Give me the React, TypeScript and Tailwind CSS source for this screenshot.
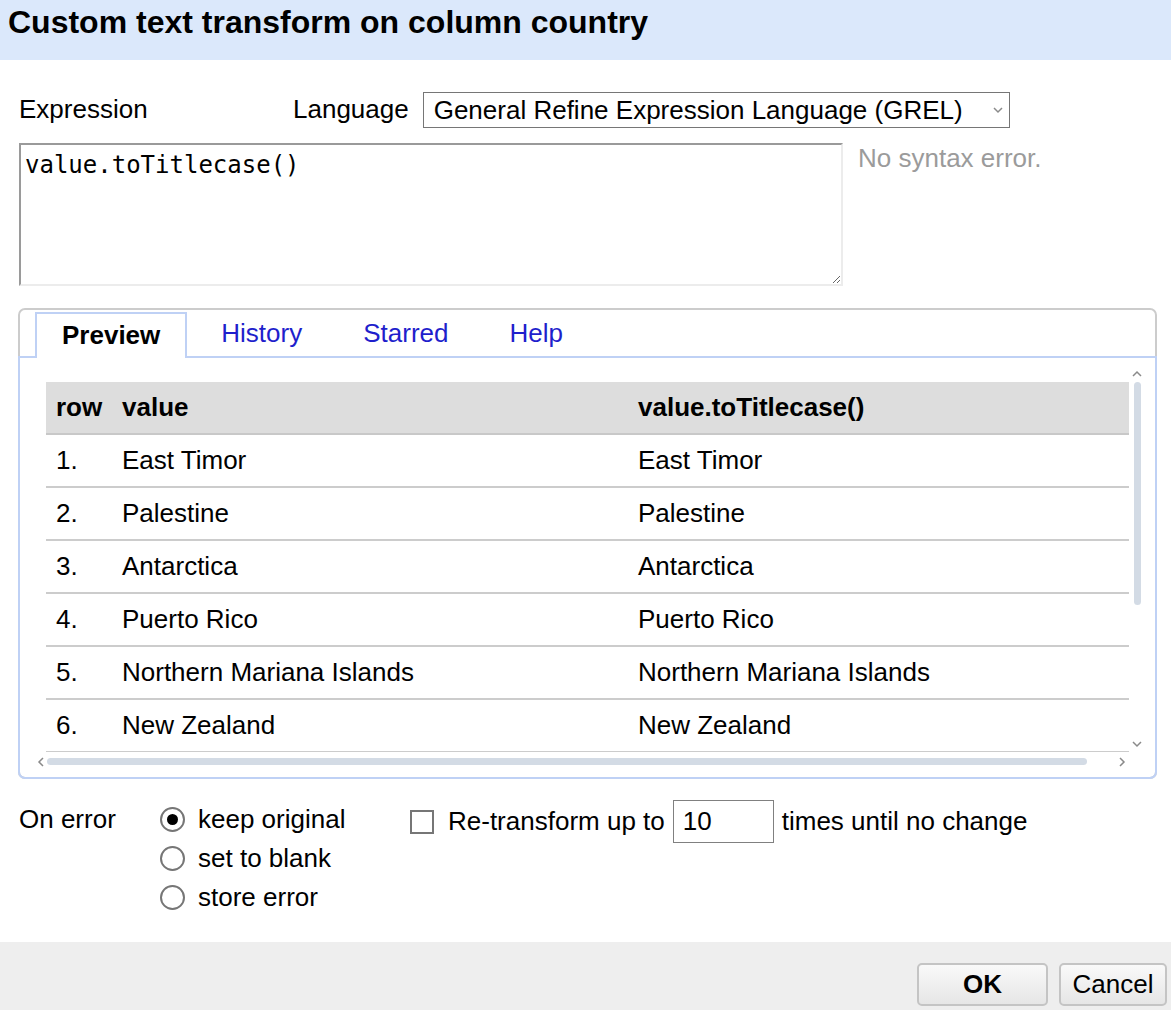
import React from "react";

const rows = [
  "East Timor",
  "Palestine",
  "Antarctica",
  "Puerto Rico",
  "Northern Mariana Islands",
  "New Zealand",
];

function Chevron({ dir }: { dir: "up" | "down" | "left" | "right" }) {
  const pts: Record<string, string> = {
    up: "1,6 5,2 9,6",
    down: "1,2 5,6 9,2",
    left: "6,1 2,5 6,9",
    right: "2,1 6,5 2,9",
  };
  const vertical = dir === "up" || dir === "down";
  return (
    <svg
      width={vertical ? 10 : 8}
      height={vertical ? 8 : 10}
      viewBox={vertical ? "0 0 10 8" : "0 0 8 10"}
      fill="none"
      stroke="#8a8a8a"
      strokeWidth={1.5}
    >
      <polyline points={pts[dir]} />
    </svg>
  );
}

function Radio({ checked, label }: { checked?: boolean; label: string }) {
  return (
    <div className="flex h-[39px] items-center">
      <span className="flex h-[25px] w-[25px] items-center justify-center rounded-full border-2 border-[#767676] bg-white">
        {checked && <span className="h-[11px] w-[11px] rounded-full bg-black" />}
      </span>
      <span className="ml-[13px]">{label}</span>
    </div>
  );
}

export default function App() {
  return (
    <div className="flex h-[1010px] w-[1171px] flex-col bg-white font-['Liberation_Sans',Arial,sans-serif] text-[26px] text-black">
      {/* title bar */}
      <div className="h-[60px] bg-[#dbe8fb] pl-[8px] pt-[3px]">
        <h1 className="text-[32px] font-bold leading-[38px]">Custom text transform on column country</h1>
      </div>

      <div className="flex-1 pl-[18px]">
        {/* language row */}
        <div className="mt-[30px] flex items-center pl-px">
          <span className="w-[274px]">Expression</span>
          <span>Language</span>
          <div className="ml-[14px] flex h-[36px] w-[587px] items-center border border-[#767676] pl-[10px] pr-[6px]">
            <span className="flex-1 leading-none">General Refine Expression Language (GREL)</span>
            <Chevron dir="down" />
          </div>
        </div>

        {/* expression box */}
        <div className="mt-[14px] flex items-start pl-px">
          <textarea
            readOnly
            value="value.toTitlecase()"
            className="h-[143px] w-[824px] resize border-2 border-t-[#9a9a9a] border-l-[#9a9a9a] border-r-[#ececec] border-b-[#ececec] px-[4px] py-[2px] font-['DejaVu_Sans_Mono',monospace] text-[24px] leading-[36px] outline-none"
          />
          <span className="ml-[15px] mt-[-4px] text-[#9b9b9b]">No syntax error.</span>
        </div>

        {/* tabs panel */}
        <div className="mt-[22px] w-[1139px] rounded-[7px] border-2 border-[#cccccc]">
          <div className="flex gap-[7px] pl-[15px] pt-[2px]">
            <div className="relative z-10 -mb-[2px] flex h-[46px] items-center border-2 border-b-0 border-[#bfd1f5] bg-white px-[25px] pb-[2px] font-bold">
              Preview
            </div>
            {["History", "Starred", "Help"].map((t) => (
              <div key={t} className="flex h-[44px] items-center px-[27px] pb-[2px] text-[#1f1fcc]">
                {t}
              </div>
            ))}
          </div>

          <div className="-mx-[2px] -mb-[2px] rounded-b-[7px] border-2 border-[#bfd1f5] pb-[6px] pl-[15px] pr-[10px] pt-[9px]">
            <div className="flex flex-col">
              <div className="flex">
                <div className="ml-[11px] mt-[15px] h-[370px] w-[1083px] overflow-hidden">
                  <table className="w-full border-collapse text-left">
                    <thead>
                      <tr className="h-[52px] border-b-2 border-[#c8c8c8] bg-[#dddddd] font-bold">
                        <th className="w-[66px] pl-[10px]">row</th>
                        <th className="w-[516px] pl-[10px]">value</th>
                        <th className="pl-[10px]">value.toTitlecase()</th>
                      </tr>
                    </thead>
                    <tbody>
                      {rows.map((r, i) => (
                        <tr key={r} className="h-[53px] border-b-2 border-[#cccccc]">
                          <td className="pl-[10px]">{i + 1}.</td>
                          <td className="pl-[10px]">{r}</td>
                          <td className="pl-[10px]">{r}</td>
                        </tr>
                      ))}
                    </tbody>
                  </table>
                </div>
                {/* vertical scrollbar */}
                <div className="flex h-[385px] w-[16px] flex-col items-center">
                  <div className="mt-[3px]">
                    <Chevron dir="up" />
                  </div>
                  <div className="mt-[4px] h-[223px] w-[7px] rounded-full bg-[#d3dbe5]" />
                  <div className="mt-auto mb-[4px]">
                    <Chevron dir="down" />
                  </div>
                </div>
              </div>
              {/* horizontal scrollbar */}
              <div className="flex h-[19px] items-center">
                <div className="ml-[2px] w-[10px]">
                  <Chevron dir="left" />
                </div>
                <div className="h-[7px] w-[1040px] rounded-full bg-[#d3dbe5]" />
                <div className="ml-[31px]">
                  <Chevron dir="right" />
                </div>
              </div>
            </div>
          </div>
        </div>

        {/* on error options */}
        <div className="mt-[21px] flex items-start pl-px">
          <span className="w-[141px] leading-[39px]">On error</span>
          <div className="flex w-[250px] flex-col">
            <Radio checked label="keep original" />
            <Radio label="set to blank" />
            <Radio label="store error" />
          </div>
          <div className="flex h-[43px] items-center">
            <span className="h-[24px] w-[24px] border-2 border-[#767676] bg-white" />
            <span className="ml-[14px]">Re-transform up to</span>
            <div className="ml-[8px] flex h-[43px] w-[101px] items-center border border-[#808080] pl-[9px]">10</div>
            <span className="ml-[8px]">times until no change</span>
          </div>
        </div>
      </div>

      {/* footer */}
      <div className="flex h-[68px] justify-end gap-[11px] bg-[#eeeeee] pr-[4px] pt-[21px]">
        <button className="h-[43px] w-[131px] rounded-[5px] border-2 border-[#c4c4c4] bg-gradient-to-b from-[#f9f9f9] to-[#e6e6e6] font-bold">
          OK
        </button>
        <button className="h-[43px] w-[108px] rounded-[5px] border-2 border-[#c4c4c4] bg-gradient-to-b from-[#f9f9f9] to-[#e6e6e6]">
          Cancel
        </button>
      </div>
    </div>
  );
}
